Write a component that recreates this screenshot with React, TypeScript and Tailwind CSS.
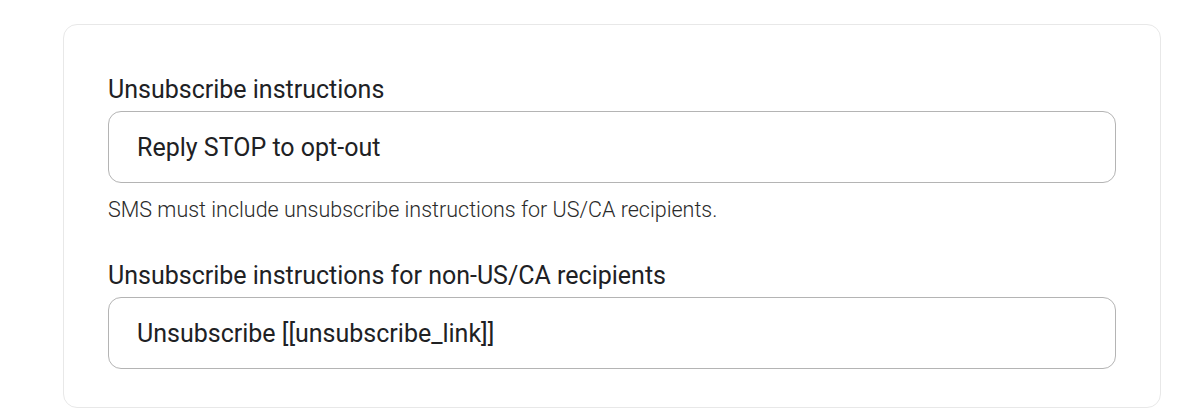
import React from 'react';

interface FieldProps {
  label: string;
  value: string;
  help?: string;
}

const Field: React.FC<FieldProps> = ({ label, value, help }) => (
  <div className="flex flex-col">
    <label className="text-[25px] leading-[30px] text-[#202124]">{label}</label>
    <input
      readOnly
      value={value}
      className="mt-[6px] h-[72px] w-full rounded-[13px] border border-[#b4b4b4] bg-white px-[28px] text-[25px] text-[#202124] outline-none"
      style={{ fontFamily: 'Roboto, "Liberation Sans", sans-serif' }}
    />
    {help && (
      <p className="mt-[14px] text-[21.5px] leading-[26px] font-light text-[#2a2a2a]">{help}</p>
    )}
  </div>
);

export default function App() {
  return (
    <div
      className="min-h-[408px] w-[1190px] bg-white pt-[24px] pl-[63px]"
      style={{ fontFamily: 'Roboto, "Liberation Sans", sans-serif' }}
    >
      <div className="w-[1098px] rounded-[14px] border border-[#e8e8e8] px-[44px] pt-[50px] pb-[38px]">
        <div className="flex flex-col gap-[38px]">
          <Field
            label="Unsubscribe instructions"
            value="Reply STOP to opt-out"
            help="SMS must include unsubscribe instructions for US/CA recipients."
          />
          <Field label="Unsubscribe instructions for non-US/CA recipients" value="Unsubscribe [[unsubscribe_link]]" />
        </div>
      </div>
    </div>
  );
}
